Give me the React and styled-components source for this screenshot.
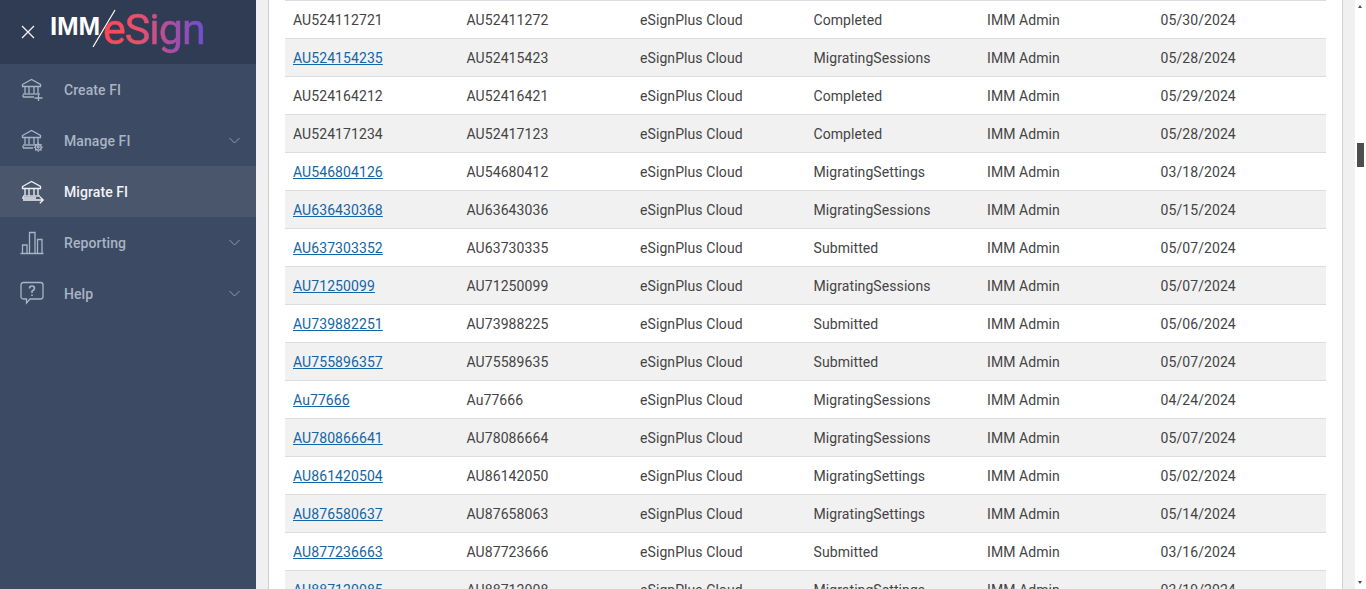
import React from "react";
import styled, { createGlobalStyle } from "styled-components";

const GlobalStyle = createGlobalStyle`
  html, body {
    margin: 0;
    height: 100%;
    overflow: hidden;
    background: #fff;
    font-family: Roboto, "Liberation Sans", sans-serif;
    letter-spacing: 0.08px;
  }
`;

const Page = styled.div`
  display: flex;
  width: 1366px;
  height: 589px;
  overflow: hidden;
`;

const Sidebar = styled.aside`
  flex: 0 0 256px;
  background: #3c4a63;
`;

const Brand = styled.div`
  display: flex;
  align-items: center;
  height: 64px;
  padding-left: 21px;
  background: #303c53;
`;

const CloseIcon = styled.svg`
  flex: none;
  width: 14px;
  height: 14px;
`;

const Logo = styled.div`
  position: relative;
  display: flex;
  margin-left: 15px;
  height: 64px;
  width: 170px;
`;

const LogoImm = styled.span`
  position: absolute;
  left: 0;
  top: 11px;
  font-family: "Liberation Sans", sans-serif;
  font-weight: 700;
  font-size: 26px;
  line-height: 30px;
  letter-spacing: -0.2px;
  color: #fff;
`;

const LogoSlash = styled.svg`
  position: absolute;
  left: 41px;
  top: 9px;
  width: 26px;
  height: 40px;
`;

const LogoSign = styled.span`
  position: absolute;
  left: 53px;
  top: 3px;
  font-family: Roboto, sans-serif;
  font-weight: 400;
  font-size: 43px;
  line-height: 52px;
  letter-spacing: -1px;
  -webkit-text-stroke: 0.5px transparent;
  background: linear-gradient(90deg, #ff4655 0%, #e9506e 35%, #a44fa8 70%, #6b50d0 100%);
  -webkit-background-clip: text;
  background-clip: text;
  color: transparent;
`;

const NavItem = styled.div`
  display: flex;
  align-items: center;
  height: 51px;
  padding: 0 16px 0 20px;
  background: ${(p) => (p.$active ? "#4a566c" : "transparent")};
  color: ${(p) => (p.$active ? "#f2f4f7" : "#a9b4c4")};
  font-size: 14px;
  font-weight: 500;
`;

const NavIcon = styled.svg`
  flex: none;
  width: 26px;
  height: 26px;
  fill: none;
  stroke: ${(p) => (p.$active ? "#eef0f4" : "#a9b4c4")};
  stroke-width: 1.3;
`;

const NavLabel = styled.span`
  flex: 1;
  margin-left: 18px;
`;

const Chevron = styled.svg`
  flex: none;
  width: 11px;
  height: 7px;
  fill: none;
  stroke: #8d99ac;
  stroke-width: 1;
`;

const Gutter = styled.div`
  flex: 0 0 12px;
  background: #f0f0f0;
`;

const Panel = styled.main`
  flex: 0 0 1075px;
  box-sizing: border-box;
  padding: 0 16px;
  border-left: 1px solid #cfcfcf;
  border-right: 1px solid #cfcfcf;
  background: #fff;
`;

const Row = styled.div`
  display: grid;
  grid-template-columns: repeat(6, 173.5px);
  box-sizing: border-box;
  height: 38px;
  align-items: center;
  border-top: 1px solid #dcdce2;
  background: ${(p) => (p.$odd ? "#f1f1f1" : "#fff")};
  font-size: 14px;
  color: #444;
`;

const Cell = styled.div`
  padding-left: 8px;
  white-space: nowrap;
`;

const RowLink = styled.a`
  color: #1465a5;
  text-decoration: underline;
`;

const Track = styled.div`
  position: relative;
  flex: 0 0 11px;
  background: #fff;
`;

const Thumb = styled.div`
  position: absolute;
  left: 2px;
  top: 143px;
  width: 7px;
  height: 24px;
  background: #4d4d4d;
`;

const Arrow = styled.div`
  position: absolute;
  left: 3px;
  width: 0;
  height: 0;
  border-left: 2.5px solid transparent;
  border-right: 2.5px solid transparent;
  ${(p) =>
    p.$up
      ? "top: 5px; border-bottom: 3px solid #4d4d4d;"
      : "bottom: 5px; border-top: 3px solid #4d4d4d;"}
`;

const Bank = () => (
  <>
    <path d="M2.5 7.5 L11.5 2.5 L20.5 7.5 V9.5 H2.5 Z" />
    <path d="M5 10 V16.5 M9 10 V16.5 M14 10 V16.5 M18 10 V16.5" />
    <path d="M3 17 H20" />
  </>
);

const icons = {
  create: (
    <>
      <Bank />
      <path d="M3 20 H14 M18.5 17.5 V24 M14.5 21 H22.5" />
      <path d="M3 17.5 V20" />
    </>
  ),
  manage: (
    <>
      <Bank />
      <path d="M3 20 H13 M3 17.5 V20" />
      <circle cx="18.3" cy="19.3" r="2.9" />
      <circle cx="18.3" cy="19.3" r="0.8" />
      <path d="M18.3 14.8 V16.4 M18.3 22.2 V23.8 M13.8 19.3 H15.4 M21.2 19.3 H22.8 M15.1 16.1 L16.2 17.2 M20.4 21.4 L21.5 22.5 M21.5 16.1 L20.4 17.2 M16.2 21.4 L15.1 22.5" />
    </>
  ),
  migrate: (
    <>
      <Bank />
      <path d="M3 17.5 V20 M3 19 H16 M3 21 H23 M19.8 17.8 L23.2 21 L19.8 24.2" />
    </>
  ),
  reporting: (
    <path d="M0.5 23.5 H23.5 M2.5 23 V15 H7 V23 M9.5 23 V2.5 H15 V23 M17.5 23 V9.5 H22 V23" />
  ),
  help: (
    <>
      <path d="M3.5 1.5 H20.5 Q23 1.5 23 4 V15.5 Q23 18 20.5 18 H10 L6.5 22 V18 H3.5 Q1 18 1 15.5 V4 Q1 1.5 3.5 1.5 Z" />
      <path d="M9.5 7.5 Q9.5 5 12 5 Q14.5 5 14.5 7.3 Q14.5 8.8 12 10.3 V12" strokeWidth="1.6" />
      <path d="M12 13.5 V15" strokeWidth="1.6" />
    </>
  ),
};

const navItems = [
  { key: "create", label: "Create FI" },
  { key: "manage", label: "Manage FI", caret: true },
  { key: "migrate", label: "Migrate FI", active: true },
  { key: "reporting", label: "Reporting", caret: true },
  { key: "help", label: "Help", caret: true },
];

const rows = [
  ["AU524112721", "AU52411272", "Completed", "05/30/2024", false],
  ["AU524154235", "AU52415423", "MigratingSessions", "05/28/2024", true],
  ["AU524164212", "AU52416421", "Completed", "05/29/2024", false],
  ["AU524171234", "AU52417123", "Completed", "05/28/2024", false],
  ["AU546804126", "AU54680412", "MigratingSettings", "03/18/2024", true],
  ["AU636430368", "AU63643036", "MigratingSessions", "05/15/2024", true],
  ["AU637303352", "AU63730335", "Submitted", "05/07/2024", true],
  ["AU71250099", "AU71250099", "MigratingSessions", "05/07/2024", true],
  ["AU739882251", "AU73988225", "Submitted", "05/06/2024", true],
  ["AU755896357", "AU75589635", "Submitted", "05/07/2024", true],
  ["Au77666", "Au77666", "MigratingSessions", "04/24/2024", true],
  ["AU780866641", "AU78086664", "MigratingSessions", "05/07/2024", true],
  ["AU861420504", "AU86142050", "MigratingSettings", "05/02/2024", true],
  ["AU876580637", "AU87658063", "MigratingSettings", "05/14/2024", true],
  ["AU877236663", "AU87723666", "Submitted", "03/16/2024", true],
  ["AU887120085", "AU88712008", "MigratingSettings", "03/19/2024", true],
];

export default function App() {
  return (
    <Page>
      <GlobalStyle />
      <Sidebar>
        <Brand>
          <CloseIcon viewBox="0 0 14 14" fill="none" stroke="#f4f5f7" strokeWidth="1.3">
            <path d="M1 1 L13 13 M13 1 L1 13" />
          </CloseIcon>
          <Logo>
            <LogoImm>IMM</LogoImm>
            <LogoSlash viewBox="0 0 26 40" fill="none" stroke="#fff" strokeWidth="1.2">
              <path d="M24 1 L2 38" />
            </LogoSlash>
            <LogoSign>eSign</LogoSign>
          </Logo>
        </Brand>
        {navItems.map((item) => (
          <NavItem key={item.key} $active={item.active}>
            <NavIcon viewBox="0 0 26 26" $active={item.active}>
              {icons[item.key]}
            </NavIcon>
            <NavLabel>{item.label}</NavLabel>
            {item.caret && (
              <Chevron viewBox="0 0 11 7">
                <path d="M0.5 1 L5.5 6 L10.5 1" />
              </Chevron>
            )}
          </NavItem>
        ))}
      </Sidebar>
      <Gutter />
      <Panel>
        {rows.map(([id, code, status, date, linked], i) => (
          <Row key={id} $odd={i % 2 === 1}>
            <Cell>{linked ? <RowLink href="#">{id}</RowLink> : id}</Cell>
            <Cell>{code}</Cell>
            <Cell>eSignPlus Cloud</Cell>
            <Cell>{status}</Cell>
            <Cell>IMM Admin</Cell>
            <Cell>{date}</Cell>
          </Row>
        ))}
      </Panel>
      <Gutter />
      <Track>
        <Arrow $up />
        <Thumb />
        <Arrow />
      </Track>
    </Page>
  );
}
